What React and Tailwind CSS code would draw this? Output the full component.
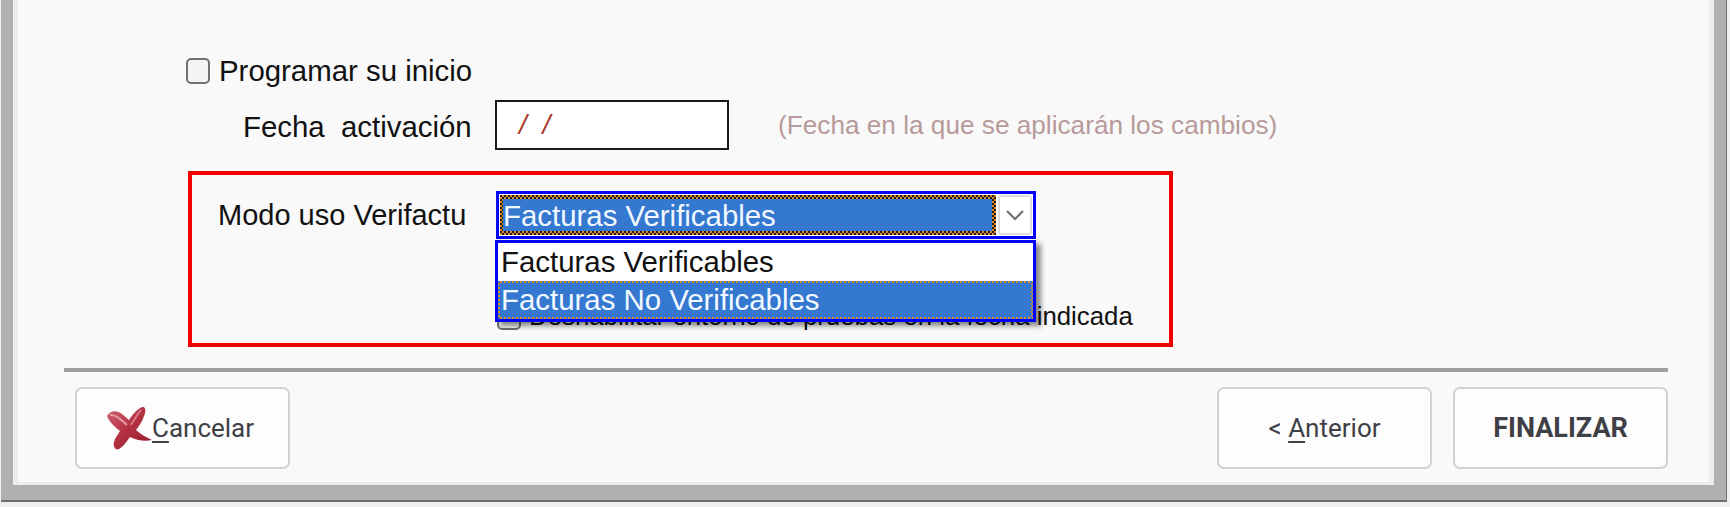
const sans = "font-['Liberation_Sans',Arial,sans-serif]"
const btnFont = "font-['Roboto','Liberation_Sans',sans-serif]"

function CrossIcon() {
  return (
    <svg width="45" height="43" viewBox="0 0 45 43" className="-ml-[4px] shrink-0">
      <defs>
        <linearGradient id="crossFill" x1="0" y1="0" x2="1" y2="1">
          <stop offset="0" stopColor="#cf6676" />
          <stop offset="0.5" stopColor="#b32f40" />
          <stop offset="1" stopColor="#8f1f30" />
        </linearGradient>
      </defs>
      <path
        d="M0 9 C3 3 10 3 15 7 L22 13 C25 8 30 2 35 0 C39 -1 39 5 37 9 C35 15 32 19 29 23 C33 27 39 30 45 33 C38 35 29 33 23 30 C20 34 16 40 12 42 C8 44 6 39 7 35 C8 31 11 27 13 24 C8 20 2 15 0 9 Z"
        fill="url(#crossFill)"
      />
      <path d="M3 8 C8 7 14 12 20 18" stroke="#eeb0b8" strokeWidth="2" fill="none" opacity="0.8" />
      <path d="M34 3 C30 8 27 13 24 18" stroke="#e69aa4" strokeWidth="2" fill="none" opacity="0.7" />
    </svg>
  )
}

function FooterButton({ className, children }) {
  return (
    <button
      className={`flex h-[82px] items-center justify-center rounded-[7px] border-2 border-[#d2d2d2] bg-[#fdfdfd] text-[26px] text-[#3f3f46] ${btnFont} ${className}`}
    >
      {children}
    </button>
  )
}

export default function App() {
  return (
    <div className={`h-[507px] w-[1730px] overflow-hidden bg-[#efefef] pb-[5px] pl-[1px] pr-[3px] ${sans}`}>
      <div className="h-[502px] border-r border-b-2 border-[#6f6f6f]">
        <div className="h-full border-x-[12px] border-b-[15px] border-[#b0b0b0]">
          <div className="h-full border-x-[5px] border-b-[3px] border-[#ececec] bg-[#f9f9f9] pl-[46px] pr-[41px]">
            <div className="flex h-[368px] flex-col pt-[57px] pl-[122px]">
              <div className="flex h-[28px] items-center">
                <span className="h-[26px] w-[24px] rounded-[5px] border-2 border-[#707070] bg-[#f4f4f4]" />
                <span className="ml-[9px] text-[29.4px] leading-none text-[#111]">Programar su inicio</span>
              </div>

              <div className="mt-[15px] flex h-[50px] items-center pl-[57px]">
                <span className="mt-[3px] w-[252px] whitespace-pre text-[29.4px] leading-none text-[#111]">
                  Fecha  activación
                </span>
                <div className="flex h-[50px] w-[234px] items-center border-2 border-[#1a1a1a] bg-white pl-[22px]">
                  <span className="whitespace-pre text-[28px] italic leading-none tracking-[4px] text-[#a83a2a]">/ /</span>
                </div>
                <span className="ml-[49px] text-[26.2px] leading-none text-[#b79a9a]">
                  (Fecha en la que se aplicarán los cambios)
                </span>
              </div>

              <div className="relative ml-[2px] mt-[21px] h-[176px] w-[985px] border-4 border-[#f00000]">
                <div className="flex items-start pl-[26px] pt-[16px]">
                  <span className="mt-[10px] w-[278px] text-[29px] leading-none text-[#111]">Modo uso Verifactu</span>
                  <div className="flex h-[48px] w-[540px] border-[3px] border-[#0000ff] bg-white p-[1px]">
                    <div className="flex-1 bg-[repeating-conic-gradient(#e08a2a_0_25%,#1c1c1c_0_50%)] bg-[length:4px_4px] p-[4px]">
                      <div className="-ml-[1px] flex h-full items-center bg-[#3478d0] pt-[2px] text-[29.4px] leading-none text-[#f2f8ff]">
                        Facturas Verificables
                      </div>
                    </div>
                    <div className="ml-[2px] flex w-[34px] items-center justify-center rounded-[3px] border-2 border-[#dedede] bg-white">
                      <svg width="20" height="12" viewBox="0 0 20 12">
                        <path d="M2 2 L10 10 L18 2" fill="none" stroke="#6e6e6e" strokeWidth="2" />
                      </svg>
                    </div>
                  </div>
                </div>

                <div className="mt-[65px] flex items-center pl-[305px]">
                  <span className="h-[26px] w-[24px] rounded-[5px] border-2 border-[#707070] bg-[#f4f4f4]" />
                  <span className="ml-[8px] text-[25.8px] leading-none text-[#111]">
                    Deshabilitar entorno de pruebas en la fecha indicada
                  </span>
                </div>

                <div className="absolute left-[303px] top-[65px] w-[541px] border-[3px] border-[#0000ff] bg-white shadow-[5px_4px_5px_rgba(0,0,0,0.45)]">
                  <div className="flex h-[38px] items-center pl-[3px] text-[29.4px] leading-none text-[#111]">
                    Facturas Verificables
                  </div>
                  <div className="h-[38px] bg-[repeating-conic-gradient(#e08a2a_0_25%,#3478d0_0_50%)] bg-[length:4px_4px] p-[2px]">
                    <div className="flex h-full items-center bg-[#3478d0] pl-[1px] text-[29.4px] leading-none text-[#f2f8ff]">
                      Facturas No Verificables
                    </div>
                  </div>
                </div>
              </div>
            </div>

            <div className="h-[4px] bg-[#a0a0a0]" />

            <div className="mt-[15px] flex pl-[11px]">
              <FooterButton className="w-[215px]">
                <CrossIcon />
                <span>
                  <span className="underline underline-offset-[4px]">C</span>ancelar
                </span>
              </FooterButton>
              <FooterButton className="ml-auto w-[215px]">
                <span className="whitespace-pre">
                  {'< '}
                  <span className="underline underline-offset-[4px]">A</span>nterior
                </span>
              </FooterButton>
              <FooterButton className="ml-[21px] w-[215px] text-[27px] font-bold">FINALIZAR</FooterButton>
            </div>
          </div>
        </div>
      </div>
    </div>
  )
}
